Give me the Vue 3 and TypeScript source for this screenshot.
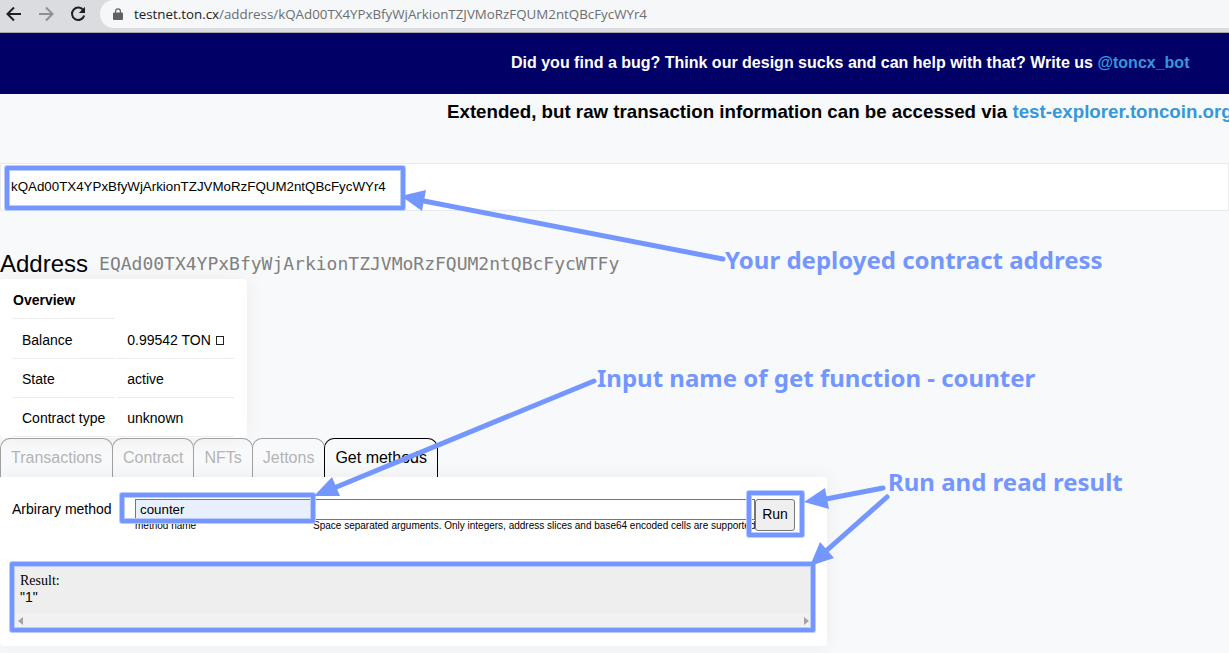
<script setup lang="ts">
import { ref } from 'vue'

interface Row { label: string; value: string }
interface Box { x: number; y: number; w: number; h: number }
interface Arrow { line: string; head: string }

const tabs: string[] = ['Transactions', 'Contract', 'NFTs', 'Jettons', 'Get methods']
const active = ref('Get methods')
const query = ref('kQAd00TX4YPxBfyWjArkionTZJVMoRzFQUM2ntQBcFycWYr4')
const method = ref('counter')
const args = ref('')

const rows: Row[] = [
  { label: 'Balance', value: '0.99542 TON' },
  { label: 'State', value: 'active' },
  { label: 'Contract type', value: 'unknown' },
]

const boxes: Box[] = [
  { x: 7, y: 168, w: 396, h: 40 },
  { x: 122, y: 495, w: 191, h: 26 },
  { x: 749, y: 493, w: 53, h: 42 },
  { x: 12, y: 564, w: 801, h: 66 },
]

const arrows: Arrow[] = [
  { line: 'M723 259 L424 201', head: 'M401 196 L426 190 L422 211 Z' },
  { line: 'M594 381 L334 488', head: 'M314 496 L332 477 L340 496 Z' },
  { line: 'M883 488 L826 499', head: 'M804 502 L825 488 L829 509 Z' },
  { line: 'M887 497 L826 551', head: 'M810 566 L820 542 L834 558 Z' },
]
</script>

<template>
  <div class="page">
    <header class="browser">
      <nav class="nav">
        <button class="icon" type="button" aria-label="Back">
          <svg width="16" height="16" viewBox="0 0 16 16"><path d="M15 8H2M8 1.500L1.500 8L8 14.500" /></svg>
        </button>
        <button class="icon dim" type="button" aria-label="Forward">
          <svg width="16" height="16" viewBox="0 0 16 16"><path d="M1 8H14M8 1.500L14.500 8L8 14.500" /></svg>
        </button>
        <button class="icon" type="button" aria-label="Reload">
          <svg width="16" height="16" viewBox="0 0 16 16"><path d="M13.500 4.500A6.200 6.200 0 1 0 14.200 9.500" /><path class="solid" d="M15 0.800V7H8.800Z" /></svg>
        </button>
      </nav>
      <div class="omnibox">
        <svg class="lock" width="10" height="12" viewBox="0 0 10 12"><path d="M1 4.500H2V3.300A3 3 0 0 1 8 3.300V4.500H9Q10 4.500 10 5.500V11Q10 12 9 12H1Q0 12 0 11V5.500Q0 4.500 1 4.500ZM3.200 4.500H6.800V3.300A1.800 1.800 0 0 0 3.200 3.300Z" /></svg>
        <button class="url" type="button"><b>testnet.ton.cx</b>/address/kQAd00TX4YPxBfyWjArkionTZJVMoRzFQUM2ntQBcFycWYr4</button>
      </div>
    </header>

    <p class="banner">Did you find a bug? Think our design sucks and can help with that? Write us <a href="#">@toncx_bot</a></p>
    <h3 class="notice">Extended, but raw transaction information can be accessed via <a href="#">test-explorer.toncoin.org</a></h3>

    <input v-model="query" class="search" type="text" aria-label="Address search" spellcheck="false" />

    <h1 class="title">Address <code>EQAd00TX4YPxBfyWjArkionTZJVMoRzFQUM2ntQBcFycWTFy</code></h1>

    <section class="card overview">
      <table>
        <thead>
          <tr><th scope="col">Overview</th></tr>
        </thead>
        <tbody>
          <tr v-for="row in rows" :key="row.label">
            <td>{{ row.label }}</td>
            <td>{{ row.value }} <i v-if="row.label === 'Balance'" class="gem"></i></td>
          </tr>
        </tbody>
      </table>
    </section>

    <div class="tabs" role="tablist">
      <button v-for="tab in tabs" :key="tab" type="button" role="tab" class="tab" :class="{ on: tab === active }" :aria-selected="tab === active" @click="active = tab">{{ tab }}</button>
    </div>

    <section class="card methods">
      <form class="form" @submit.prevent>
        <span class="caption">Arbirary method</span>
        <div class="field name">
          <input id="method" v-model="method" type="text" spellcheck="false" />
          <label for="method">method name</label>
        </div>
        <div class="field args">
          <input id="args" v-model="args" type="text" />
          <label for="args">Space separated arguments. Only integers, address slices and base64 encoded cells are supported</label>
        </div>
        <button class="run" type="submit">Run</button>
      </form>
      <div class="result">
        <div class="output">Result:<br /><span>"1"</span></div>
        <div class="scroll">
          <svg width="5" height="8" viewBox="0 0 5 8"><path d="M5 0V8L0 4Z" /></svg>
          <svg width="5" height="8" viewBox="0 0 5 8"><path d="M0 0V8L5 4Z" /></svg>
        </div>
      </div>
    </section>

    <div class="notes">
      <svg width="1229" height="653" viewBox="0 0 1229 653">
        <g class="halo">
          <rect v-for="(b, i) in boxes" :key="i" :x="b.x" :y="b.y" :width="b.w" :height="b.h" />
        </g>
        <g class="ink">
          <rect v-for="(b, i) in boxes" :key="i" :x="b.x" :y="b.y" :width="b.w" :height="b.h" />
          <path v-for="(a, i) in arrows" :key="i" :d="a.line" />
        </g>
        <path v-for="(a, i) in arrows" :key="i" class="head" :d="a.head" />
      </svg>
      <span class="note deployed">Your deployed contract address</span>
      <span class="note getter">Input name of get function - counter</span>
      <span class="note read">Run and read result</span>
    </div>
  </div>
</template>

<style>
body {
  background: #f8f9fb;
}
</style>

<style scoped>
.page {
  position: relative;
  min-height: 100vh;
  overflow: hidden;
  background: #f8f9fb;
  color: #000;
  font-family: "Liberation Sans", Arial, sans-serif;
  font-size: 16px;
}
.page * {
  box-sizing: border-box;
}
a {
  color: #3498db;
  text-decoration: none;
}
button,
input {
  font-family: inherit;
  color: #000;
}
.browser {
  display: flex;
  height: 33px;
  background: #dadce0;
  border-bottom: 1px solid #a8a9ac;
}
.nav {
  display: flex;
  gap: 16px;
  width: 100px;
  height: 28px;
  padding-left: 6px;
  align-items: center;
}
.icon {
  display: flex;
  padding: 0;
  border: 0;
  background: none;
}
.icon path {
  fill: none;
  stroke: #1f2023;
  stroke-width: 2;
}
.icon path.solid {
  fill: #1f2023;
  stroke: none;
}
.icon.dim path {
  stroke: #8d8f93;
}
.omnibox {
  display: flex;
  flex: 1;
  height: 28px;
  padding-left: 13px;
  align-items: center;
  gap: 11px;
  border-radius: 14px 0 0 14px;
  background: #f6f7f9;
}
.lock {
  fill: #5f6368;
}
.url {
  padding: 0;
  border: 0;
  background: none;
  font-family: "Open Sans", "Noto Sans", sans-serif;
  line-height: 20px;
  color: #6b6e72;
  white-space: nowrap;
}
.url b {
  font-weight: 400;
  color: #202124;
}
.banner {
  margin: 0;
  padding-left: 511px;
  background: #000066;
  color: #fff;
  font-size: 16px;
  font-weight: 700;
  line-height: 59px;
  height: 61px;
  white-space: nowrap;
}
.notice {
  margin: 0;
  padding: 6px 0 0 447px;
  height: 69px;
  line-height: 24px;
  white-space: nowrap;
}
.search {
  display: block;
  width: 100%;
  height: 48px;
  padding: 0 10px 2px;
  border: 1px solid #e9eaec;
  background: #fff;
}
.title {
  display: flex;
  align-items: center;
  gap: 11px;
  margin: 0;
  padding: 38px 0 0;
  height: 68px;
  font-size: 24px;
  font-weight: 400;
  line-height: 30px;
}
.title code {
  font-family: "DejaVu Sans Mono", monospace;
  font-size: 18px;
  color: #808080;
}
.card {
  border-radius: 4px;
  background: #fff;
  box-shadow: 0 0 20px rgba(0, 0, 0, 0.06);
  font-size: 14px;
}
.overview {
  width: 247px;
  height: 159px;
  padding-left: 10px;
}
table {
  border-spacing: 2px 0;
  border-collapse: separate;
}
th {
  height: 40px;
  padding: 2px 1px 0;
  text-align: left;
  border-bottom: 1px solid #ececec;
}
td {
  height: 39px;
  padding: 2px 10px 0;
  border-bottom: 1px solid #ececec;
  white-space: nowrap;
}
tr:first-child td {
  height: 40px;
}
.gem {
  display: inline-block;
  width: 8px;
  height: 9px;
  margin-left: 1px;
  border: 1px solid #222;
}
.tabs {
  display: flex;
}
.tab {
  height: 39px;
  padding: 0 10px;
  border: 1px solid #a0a0a0;
  border-bottom: 0;
  border-radius: 10px 10px 0 0;
  background: none;
  color: #b4b4b4;
  font-size: 16px;
}
.tab + .tab {
  margin-left: -1px;
}
.tab.on {
  border-color: #000;
  color: #000;
}
.methods {
  position: relative;
  width: 827px;
  height: 169px;
  padding: 22px 12px 0;
}
.form {
  display: flex;
  align-items: flex-start;
  height: 66px;
}
.caption {
  width: 123px;
  line-height: 21px;
}
.field {
  display: flex;
  flex-direction: column;
}
.field input {
  width: 100%;
  height: 21px;
  padding: 0 4px;
  border: 1px solid #767676;
}
.field label {
  font-size: 10px;
  line-height: 12px;
  white-space: nowrap;
}
.name {
  width: 178px;
}
.name input {
  background: #e8f0fe;
}
.args {
  width: 442px;
}
.run {
  width: 40px;
  height: 32px;
  padding: 0 0 2px;
  border: 1px solid #767676;
  border-radius: 3px;
  background: #efefef;
  font-size: 14px;
}
.result {
  background: #eee;
}
.output {
  height: 48px;
  padding: 7px 8px 0;
  font: 14px/17px "Liberation Serif", serif;
}
.output span {
  font-family: "Liberation Sans", Arial, sans-serif;
}
.scroll {
  display: flex;
  justify-content: space-between;
  align-items: center;
  height: 16px;
  padding: 0 6px;
  background: #f1f1f1;
  fill: #a3a3a3;
}
.notes {
  position: absolute;
  inset: 0;
  pointer-events: none;
}
.halo rect {
  fill: none;
  stroke: #b9cbff;
  stroke-width: 6;
  stroke-linejoin: round;
}
.ink rect,
.ink path {
  fill: none;
  stroke: #7396ff;
  stroke-width: 4;
  stroke-linejoin: round;
  stroke-linecap: round;
}
.ink path {
  stroke-width: 5;
}
.head {
  fill: #7396ff;
}
.note {
  position: absolute;
  color: #7396ff;
  font: 700 24px/32px "Noto Sans", "Open Sans", sans-serif;
  white-space: nowrap;
}
.deployed {
  left: 725px;
  top: 244px;
}
.getter {
  left: 597px;
  top: 362px;
}
.read {
  left: 888px;
  top: 466px;
}
</style>
